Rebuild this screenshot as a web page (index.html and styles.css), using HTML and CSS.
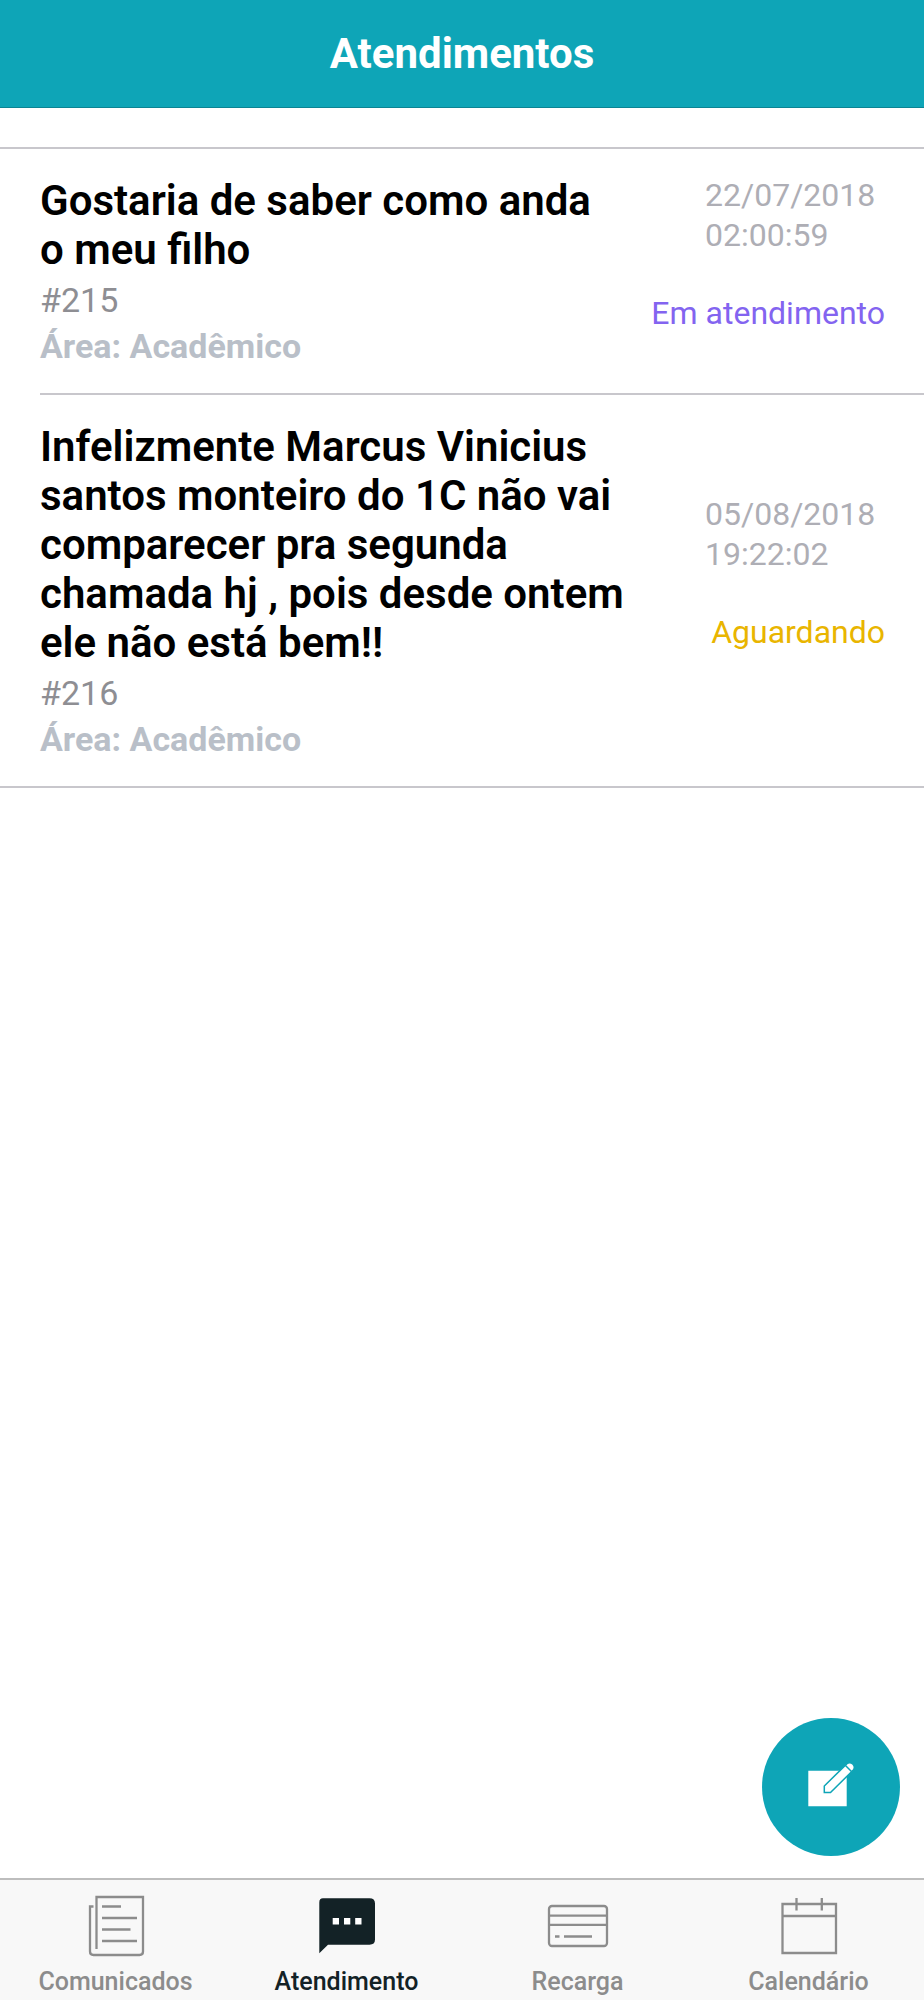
FILE: index.html
```html
<!DOCTYPE html>
<html lang="pt-BR">
<head>
<meta charset="utf-8">
<meta name="viewport" content="width=device-width, initial-scale=1">
<title>Atendimentos</title>
<link rel="stylesheet" href="styles.css">
</head>
<body>
<div class="app">
  <header class="topbar"><h1 class="topbar-title">Atendimentos</h1></header>
  <main class="content">
    <ul class="tickets">
      <li class="ticket">
        <a class="ticket-link" href="#215">
          <div class="ticket-main">
            <h2 class="ticket-title">Gostaria de saber como anda o meu filho</h2>
            <p class="ticket-id">#215</p>
            <p class="ticket-area">Área: Acadêmico</p>
          </div>
          <div class="ticket-side">
            <time class="ticket-date">22/07/2018 02:00:59</time>
            <span class="ticket-status status-active">Em atendimento</span>
          </div>
        </a>
      </li>
      <li class="ticket">
        <a class="ticket-link" href="#216">
          <div class="ticket-main">
            <h2 class="ticket-title">Infelizmente Marcus Vinicius santos monteiro do 1C não vai comparecer pra segunda chamada hj , pois desde ontem ele não está bem!!</h2>
            <p class="ticket-id">#216</p>
            <p class="ticket-area">Área: Acadêmico</p>
          </div>
          <div class="ticket-side">
            <time class="ticket-date">05/08/2018 19:22:02</time>
            <span class="ticket-status status-waiting">Aguardando</span>
          </div>
        </a>
      </li>
    </ul>
  </main>
  <div class="dock">
    <button class="fab" type="button" aria-label="Novo atendimento">
      <svg class="fab-icon" viewBox="0 0 48 48" aria-hidden="true">
        <path fill="#fff" d="M1.300 7.700H39.700V43.300H1.300z"/>
        <path fill="#fff" stroke="#0ea5b7" stroke-width="1.500" d="M17.300 29.500V23L40 .6Q43 -1.500 46 1.200Q48.500 4 46.300 7L23.500 29.500z"/>
        <path fill="none" stroke="#0ea5b7" stroke-width="1.500" d="M38.500 2.500L44.500 8.500"/>
      </svg>
    </button>
    <nav class="tabbar">
      <a class="tab" href="#comunicados">
        <svg class="tab-icon" viewBox="0 0 64 64" aria-hidden="true">
          <path class="line" d="M12.500 55V3H59V57.500Q59 61 55.500 61H9.500Q6 61 6 57.500V12.500H9.500M18 12.500H37M18 24H53M18 35.500H46.500M18 47H53"/>
        </svg>
        <span class="tab-label">Comunicados</span>
      </a>
      <a class="tab tab-current" href="#atendimento" aria-current="page">
        <svg class="tab-icon" viewBox="0 0 64 64" aria-hidden="true">
          <path fill="currentColor" d="M8 4.300H54.500Q60 4.300 60 9.500V45.500Q60 50.700 54.500 50.700H13L4.300 59.300V8.500Q4.300 4.300 8 4.300z"/>
          <path fill="#fff" d="M17.700 24H24V30.500H17.700zM29 24H35.300V30.500H29zM40.200 24H46.500V30.500H40.200z"/>
        </svg>
        <span class="tab-label">Atendimento</span>
      </a>
      <a class="tab" href="#recarga">
        <svg class="tab-icon" viewBox="0 0 64 64" aria-hidden="true">
          <rect class="line" x="3" y="12" width="58" height="40" rx="3"/>
          <path class="line" d="M3 21.700H61M3 30.800H61M9 42.500H13.500M18 42.500H46"/>
        </svg>
        <span class="tab-label">Recarga</span>
      </a>
      <a class="tab" href="#calendario">
        <svg class="tab-icon" viewBox="0 0 64 64" aria-hidden="true">
          <path class="line" d="M5.500 10H59V59H5.500zM5.500 22H59M19.500 4V16.500M44.800 4V16.500"/>
        </svg>
        <span class="tab-label">Calendário</span>
      </a>
    </nav>
  </div>
</div>
</body>
</html>
```
FILE: styles.css
```css
* { box-sizing: border-box; }

body {
  margin: 0;
  background: #fff;
  color: #000;
  font-family: Roboto, "Liberation Sans", sans-serif;
}

h1, h2, p, ul { margin: 0; padding: 0; }
a { color: inherit; text-decoration: none; }

.app {
  display: flex;
  flex-direction: column;
  min-height: 100vh;
}

.topbar {
  padding: 29px 24px 28px;
  background: #0ea5b7;
  border-bottom: 1px solid #0b8493;
  text-align: center;
}

.topbar-title {
  font-size: 42px;
  line-height: 50px;
  font-weight: 700;
  color: #fff;
}

.content {
  flex: 1;
  padding-top: 39px;
}

.tickets {
  list-style: none;
  border-top: 2px solid #c8c7cc;
  border-bottom: 2px solid #c8c7cc;
}

.ticket { padding-left: 40px; }

.ticket-link {
  display: flex;
  justify-content: space-between;
  padding-right: 39px;
}

.ticket + .ticket .ticket-link { border-top: 2px solid #c8c7cc; }

.ticket-main {
  flex: 1;
  max-width: 584px;
  padding: 27px 0 24px;
}

.ticket-title {
  margin-bottom: 3px;
  font-size: 42px;
  line-height: 49px;
  font-weight: 600;
}

.ticket-id {
  font-size: 34px;
  line-height: 46px;
  color: #8e8e93;
}

.ticket-area {
  font-size: 34px;
  line-height: 46px;
  font-weight: 700;
  color: #b9bfc8;
}

.ticket-side {
  display: flex;
  flex-direction: column;
  align-items: flex-end;
  justify-content: center;
  gap: 38px;
  padding-bottom: 35px;
  font-size: 32px;
  line-height: 40px;
}

.ticket-date {
  width: 180px;
  color: #aeaeb5;
}

.status-active { color: #8364f0; }
.status-waiting { color: #e9b500; }

.dock {
  position: sticky;
  bottom: 0;
}

.fab {
  position: absolute;
  right: 24px;
  bottom: calc(100% + 22px);
  display: grid;
  place-items: center;
  width: 138px;
  height: 138px;
  padding: 0;
  border: 0;
  border-radius: 50%;
  background: #0ea5b7;
}

.fab-icon {
  width: 48px;
  height: 48px;
  overflow: visible;
}

.tabbar {
  display: grid;
  grid-template-columns: repeat(4, 1fr);
  background: #f8f8f8;
  border-top: 2px solid #bdbdbd;
}

.tab {
  display: flex;
  flex-direction: column;
  align-items: center;
  gap: 8px;
  padding: 14px 0 2px;
  color: #8c8c8c;
}

.tab-current { color: #132226; }

.tab-icon {
  width: 64px;
  height: 64px;
}

.line {
  fill: none;
  stroke: currentColor;
  stroke-width: 2.3;
}

.tab-label {
  font-size: 25px;
  line-height: 32px;
  font-weight: 500;
}
```
